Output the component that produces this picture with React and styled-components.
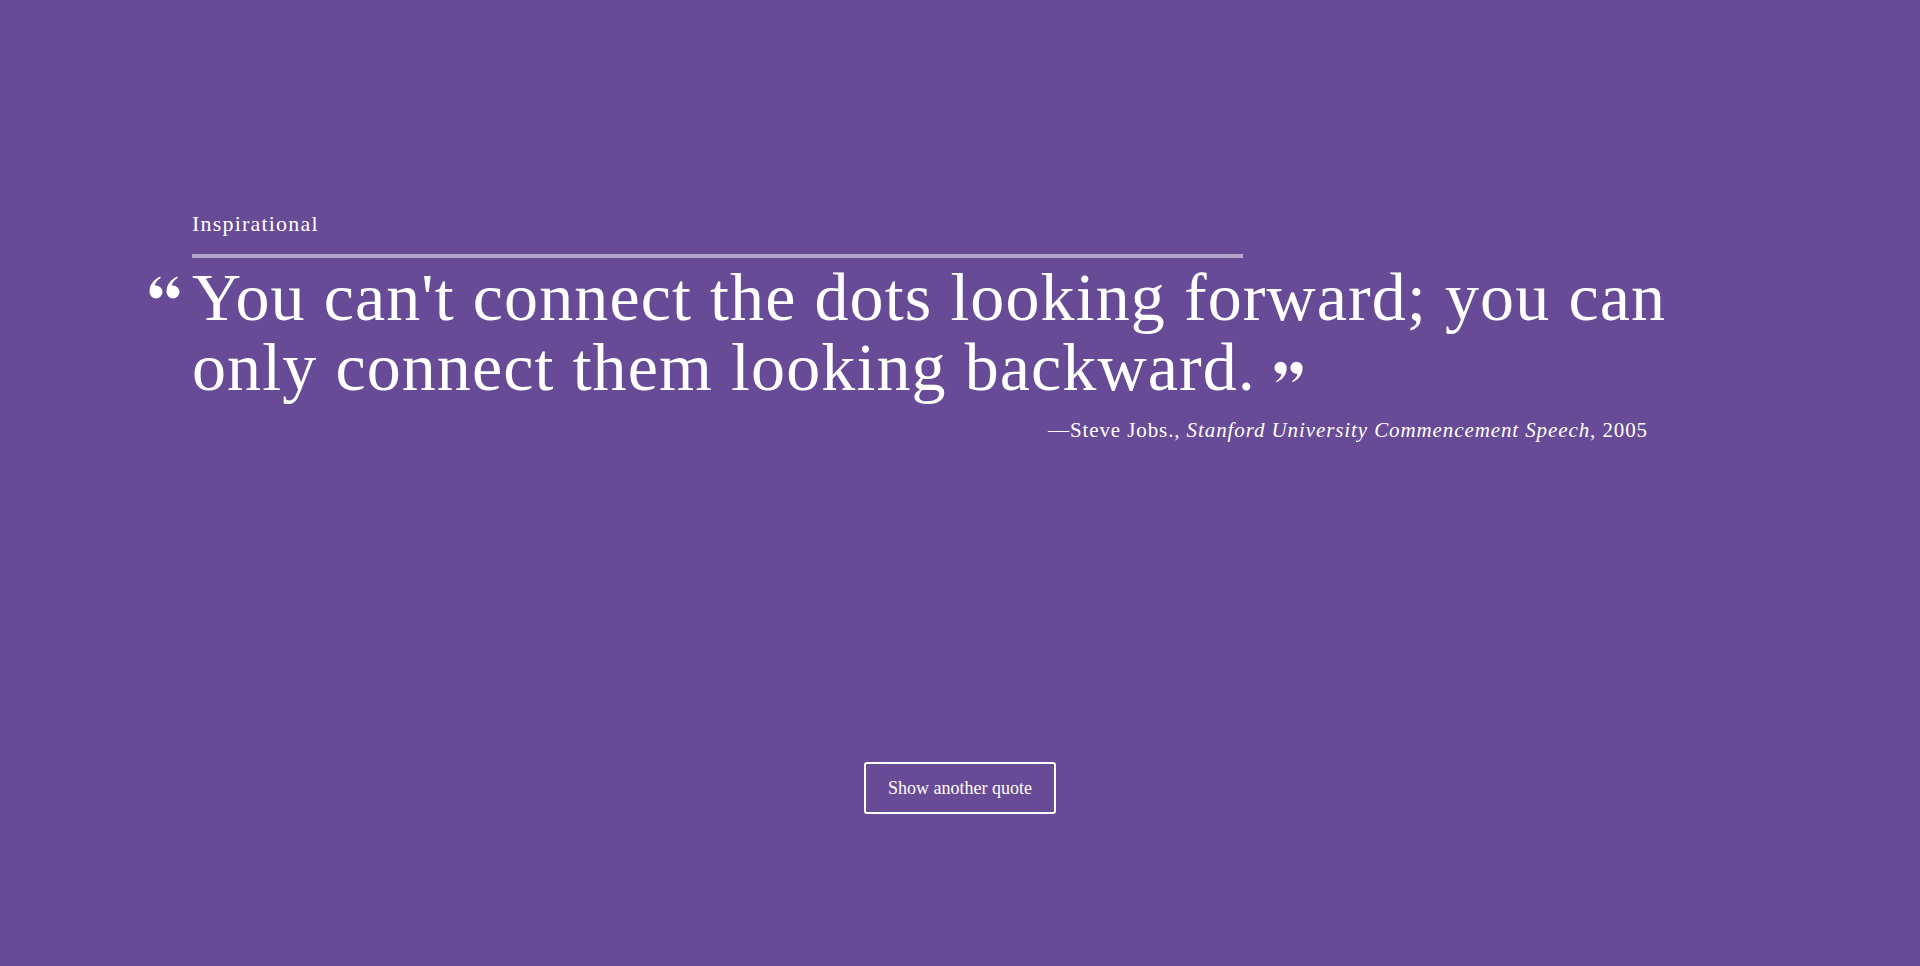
import React from "react";
import styled, { createGlobalStyle } from "styled-components";

const GlobalStyle = createGlobalStyle`
  html, body {
    margin: 0;
    padding: 0;
    background: #674b96;
  }
  body {
    font-family: "Liberation Serif", "DejaVu Serif", serif;
    color: #ffffff;
  }
`;

const Page = styled.main`
  min-height: 100vh;
  box-sizing: border-box;
  padding-top: 210px;
  display: flex;
  flex-direction: column;
  align-items: center;
`;

const QuoteBox = styled.section`
  width: 80%;
  align-self: center;
`;

const Category = styled.div`
  font-size: 22px;
  line-height: 28px;
  letter-spacing: 1.2px;
`;

const Rule = styled.div`
  width: 1051px;
  height: 4px;
  margin: 16px 0 4px;
  background: rgba(255, 255, 255, 0.5);
`;

const Quote = styled.blockquote`
  margin: 0;
  font-size: 68px;
  line-height: 70px;
  letter-spacing: 1.1px;
  font-weight: 400;
`;

const QuoteMark = styled.svg`
  display: inline-block;
  width: ${(p) => p.$w}px;
  height: ${(p) => p.$h}px;
  vertical-align: ${(p) => p.$lift}px;
  margin-left: ${(p) => p.$ml}px;
  margin-right: ${(p) => p.$mr}px;
  fill: #ffffff;
`;

const Attribution = styled.p`
  margin: 14px 80px 0 0;
  text-align: right;
  font-size: 21px;
  line-height: 28px;
  letter-spacing: 0.9px;
`;

const Source = styled.cite`
  font-style: italic;
`;

const Button = styled.button`
  margin-top: 318px;
  height: 52px;
  padding: 0 22px;
  background: transparent;
  border: 2px solid #ffffff;
  border-radius: 3px;
  color: #ffffff;
  font-family: "Liberation Serif", "DejaVu Serif", serif;
  font-size: 18px;
  cursor: pointer;
`;

const commaPath =
  "M7,0.5 A6.5,6.5 0 0 1 13.5,7 C13.5,14 9.5,19.5 2.8,22.5 L2.2,21.3 C5.6,19.2 7.6,16.6 8.2,13.4 A6.5,6.5 0 0 1 7,13.5 A6.5,6.5 0 0 1 7,0.5 Z";

function Marks({ open, ...rest }) {
  return (
    <QuoteMark viewBox="0 0 32 23" {...rest}>
      <g transform={open ? "rotate(180 16 11.5)" : undefined}>
        <path d={commaPath} />
        <path d={commaPath} transform="translate(17 0)" />
      </g>
    </QuoteMark>
  );
}

export default function App() {
  return (
    <>
      <GlobalStyle />
      <Page>
        <QuoteBox>
          <Category>Inspirational</Category>
          <Rule />
          <Quote>
            <Marks open $w={32} $h={23} $lift={21} $ml={-44} $mr={12} />
            You can't connect the dots looking forward; you can only connect
            them looking backward.
            <Marks $w={30} $h={24} $lift={6} $ml={18} $mr={0} />
          </Quote>
          <Attribution>
            —Steve Jobs., <Source>Stanford University Commencement Speech</Source>, 2005
          </Attribution>
        </QuoteBox>
        <Button type="button">Show another quote</Button>
      </Page>
    </>
  );
}
